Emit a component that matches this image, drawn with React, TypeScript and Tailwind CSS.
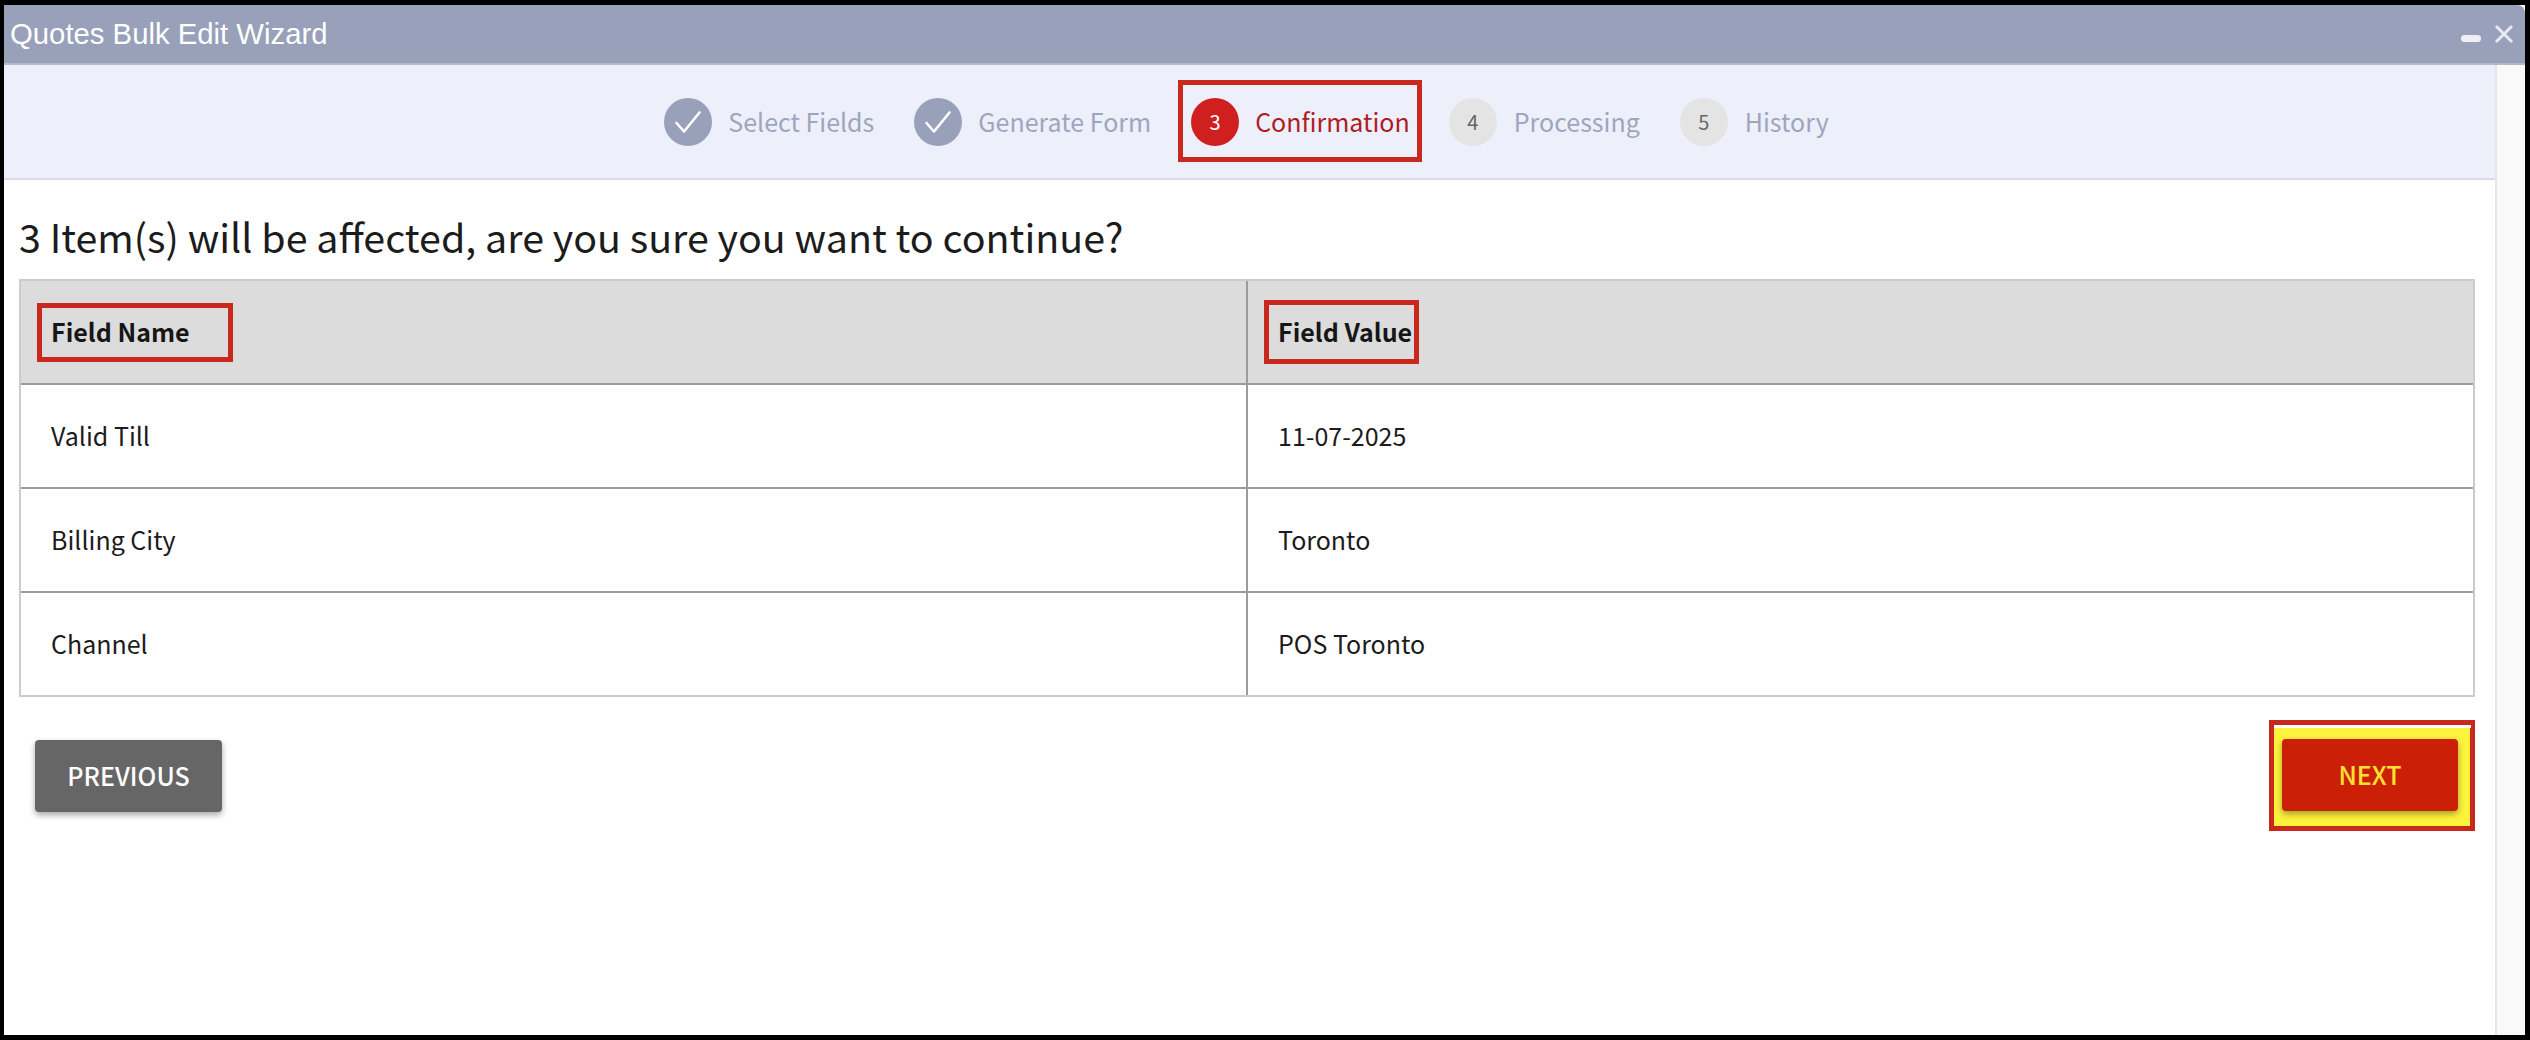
import React from "react";

const Check = () => (
  <svg width="26" height="24" viewBox="0 0 26 24" fill="none" stroke="#ffffff" strokeWidth="2.6" strokeLinecap="round" strokeLinejoin="round">
    <path d="M1.5 13 L9 21.5 L24.5 2.5" />
  </svg>
);

function Done({ label }: { label: string }) {
  return (
    <div className="flex items-center gap-[16px]">
      <div className="flex h-[48px] w-[48px] items-center justify-center rounded-full bg-[#98a0ba]">
        <Check />
      </div>
      <span className="mt-[-2px] text-[25px] leading-[36px] text-[#9ea5bd]">{label}</span>
    </div>
  );
}

function Pending({ n, label }: { n: number; label: string }) {
  return (
    <div className="flex items-center gap-[17px]">
      <div className="flex h-[48px] w-[48px] items-center justify-center rounded-full bg-[#e4e4e4] text-[20px] text-[#666666]">
        {n}
      </div>
      <span className="mt-[-2px] text-[25px] leading-[36px] text-[#9ea5bd]">{label}</span>
    </div>
  );
}

function Row({ a, b, last }: { a: string; b: string; last?: boolean }) {
  return (
    <div className={`grid grid-cols-[1227px_1fr] text-[25px] text-[#1c1c1c] ${last ? "h-[102px]" : "h-[104px] border-b-2 border-[#9c9c9c]"}`}>
      <div className="flex items-center border-r-2 border-[#9c9c9c] pl-[30px]">{a}</div>
      <div className="flex items-center pl-[30px]">{b}</div>
    </div>
  );
}

export default function App() {
  return (
    <div className="flex h-[1040px] w-[2530px] flex-col border-t-[5px] border-r-[5px] border-b-[5px] border-l-[4px] border-black bg-white font-['Noto_Sans_CJK_JP','Noto_Sans',sans-serif]">
      <div className="flex h-[60px] shrink-0 items-center justify-between rounded-tr-[8px] border-b-2 border-[#b5b9c6] bg-[#98a0ba] pl-[6px] pr-[11px] font-['Liberation_Sans',Arial,sans-serif] text-[29.3px] text-white">
        <span>Quotes Bulk Edit Wizard</span>
        <div className="flex items-center gap-[13px]">
          <div className="mt-[8px] h-[7px] w-[20px] rounded-full bg-[#eef0f6]" />
          <svg width="20" height="20" viewBox="0 0 20 20" stroke="#e8eaf1" strokeWidth="3">
            <path d="M2 2 L18 18 M18 2 L2 18" />
          </svg>
        </div>
      </div>
      <div className="flex min-h-0 flex-1">
        <div className="flex min-w-0 flex-1 flex-col">
          <div className="flex h-[115px] shrink-0 items-center justify-center gap-[40px] border-b-2 border-[#d8dbe4] bg-[#edf0fb] pr-[6px]">
            <Done label="Select Fields" />
            <Done label="Generate Form" />
            <div className="mx-[-13px] mt-[-2px] flex h-[82px] items-center gap-[16px] border-[5px] border-[#c9281d] pl-[8px] pr-[7px]">
              <div className="mt-[2px] flex h-[48px] w-[48px] items-center justify-center rounded-full bg-[#cf1f1f] text-[20px] text-white">3</div>
              <span className="text-[25px] leading-[36px] text-[#b01c24]">Confirmation</span>
            </div>
            <Pending n={4} label="Processing" />
            <Pending n={5} label="History" />
          </div>
          <div className="flex h-[99px] shrink-0 items-center pl-[15px] pt-[12px] text-[39.4px] text-[#1c1c1c]">
            3 Item(s) will be affected, are you sure you want to continue?
          </div>
          <div className="ml-[15px] mr-[20px] shrink-0 border-2 border-[#cccccc]">
            <div className="grid h-[104px] grid-cols-[1227px_1fr] border-b-2 border-[#9c9c9c] bg-[#dcdcdc] text-[25px] font-bold text-[#161616]">
              <div className="flex items-center border-r-2 border-[#9c9c9c] pl-[16px]">
                <span className="flex h-[59px] w-[196px] items-center whitespace-nowrap border-[5px] border-[#c9281d] pl-[9px]">Field Name</span>
              </div>
              <div className="flex items-center pl-[16px]">
                <span className="flex h-[64px] w-[155px] items-center whitespace-nowrap border-[5px] border-[#c9281d] pl-[9px]">Field Value</span>
              </div>
            </div>
            <Row a="Valid Till" b="11-07-2025" />
            <Row a="Billing City" b="Toronto" />
            <Row a="Channel" b="POS Toronto" last />
          </div>
          <div className="mt-[23px] flex items-center justify-between pl-[31px] pr-[20px]">
            <button className="flex h-[72px] w-[187px] items-center justify-center rounded-[4px] bg-[#666666] text-[25px] font-medium text-white shadow-[0_3px_6px_rgba(0,0,0,0.35)]">
              PREVIOUS
            </button>
            <div className="flex h-[111px] w-[206px] flex-col border-[5px] border-[#c9281d] bg-[#fdf23c]">
              <div className="mr-[-1px] h-[3px] shrink-0 bg-white" />
              <div className="flex flex-1 items-start justify-center pr-[4px] pt-[11px]">
                <button className="flex h-[72px] w-[176px] items-center justify-center rounded-[4px] bg-[#cb2007] text-[25px] font-medium text-[#fde033] shadow-[0_3px_6px_rgba(0,0,0,0.35)]">
                  NEXT
                </button>
              </div>
            </div>
          </div>
        </div>
        <div className="w-[30px] shrink-0 border-l-2 border-[#e6e6e6] bg-[#f9f9f9]" />
      </div>
    </div>
  );
}
